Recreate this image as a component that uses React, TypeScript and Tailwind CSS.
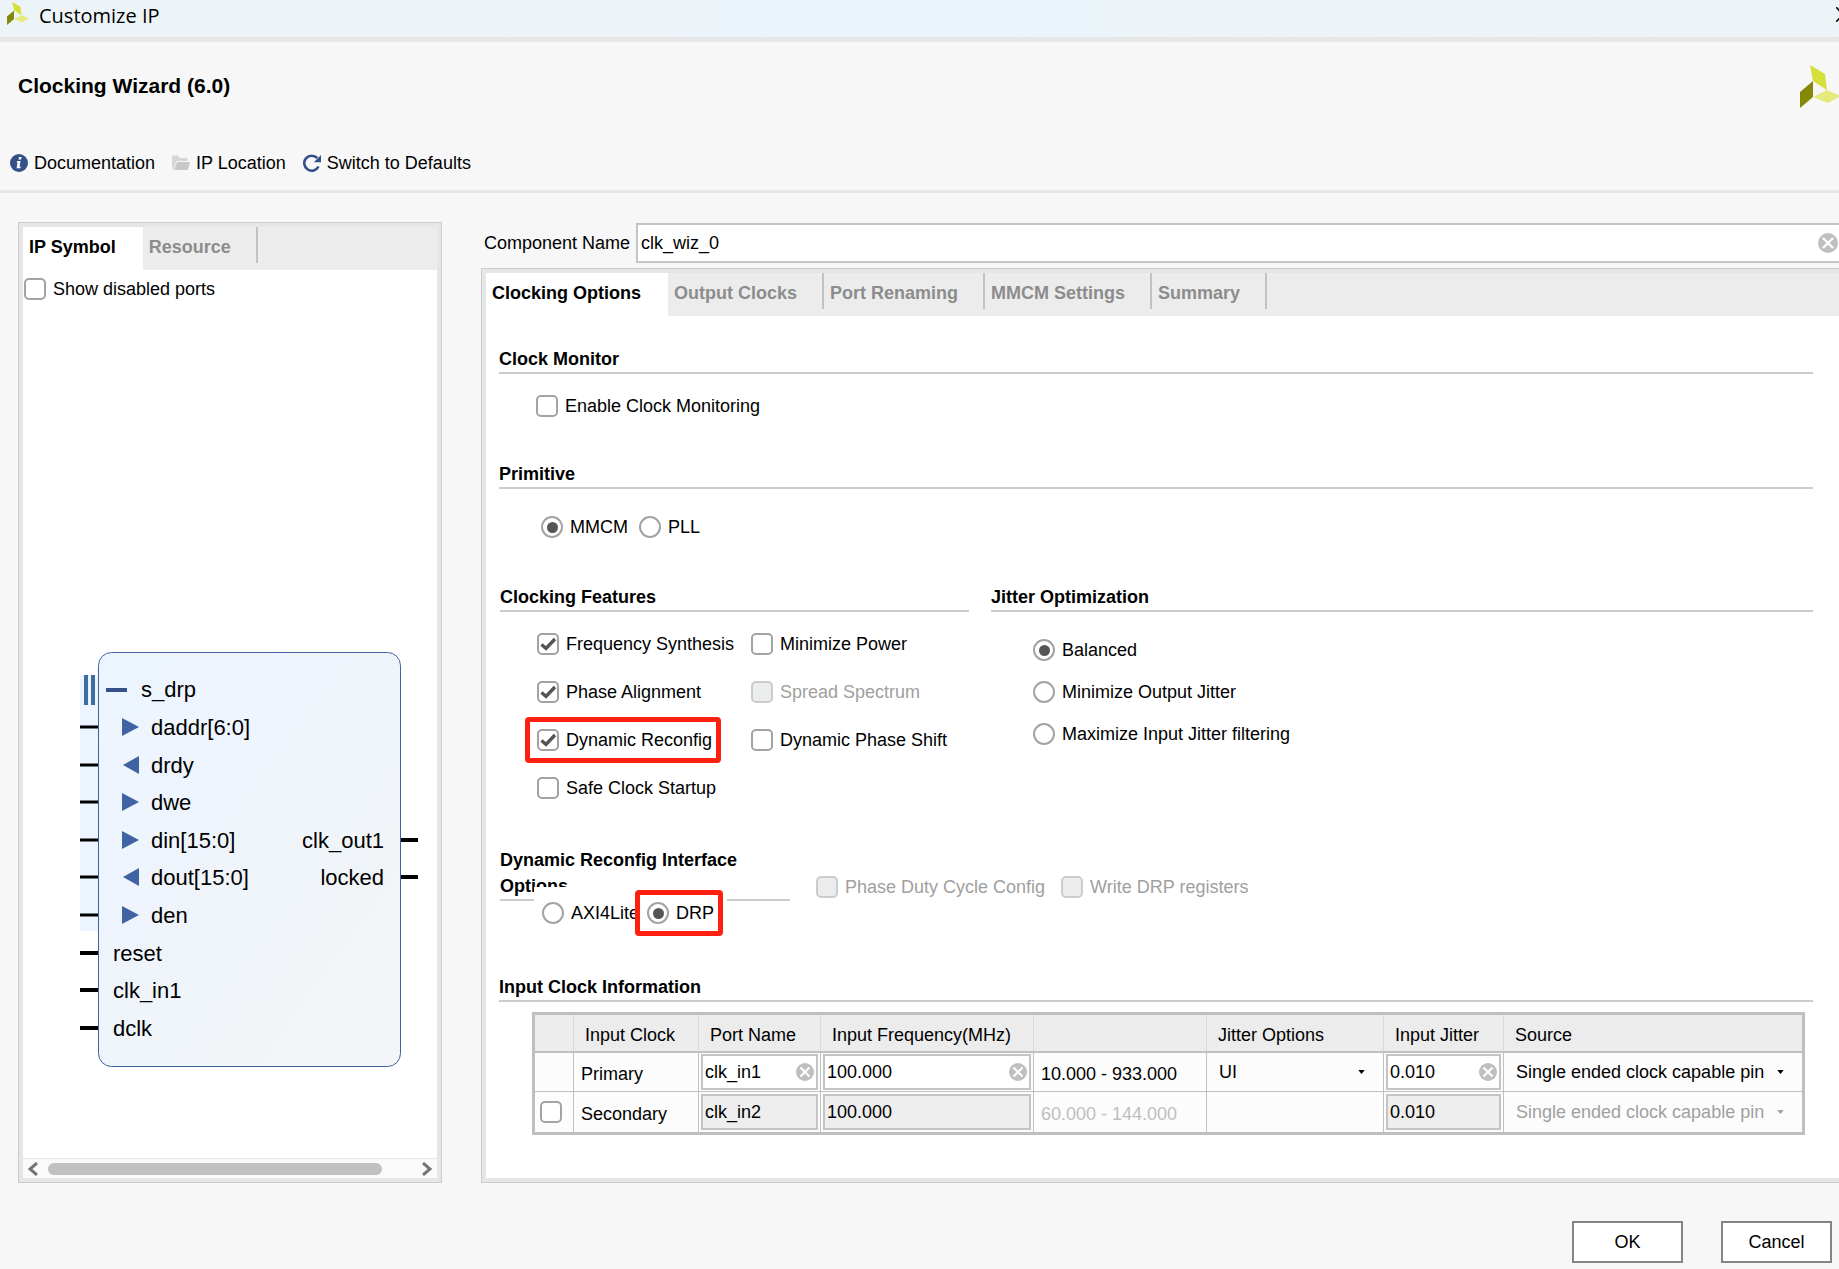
import React from 'react';
import clsx from 'clsx';

const LEFT_TABS = ['IP Symbol', 'Resource'];
const MAIN_TABS = ['Clocking Options', 'Output Clocks', 'Port Renaming', 'MMCM Settings', 'Summary'];

const DRP_PORTS = [
  { name: 'daddr[6:0]', dir: 'in', y: 75 },
  { name: 'drdy', dir: 'out', y: 113 },
  { name: 'dwe', dir: 'in', y: 150 },
  { name: 'din[15:0]', dir: 'in', y: 188 },
  { name: 'dout[15:0]', dir: 'out', y: 225 },
  { name: 'den', dir: 'in', y: 263 },
];

const INPUT_PORTS = [
  { name: 'reset', y: 301 },
  { name: 'clk_in1', y: 338 },
  { name: 'dclk', y: 376 },
];

const OUTPUT_PORTS = [
  { name: 'clk_out1', y: 188 },
  { name: 'locked', y: 225 },
];

const Logo: React.FC<{ className?: string }> = ({ className }) => (
  <svg viewBox="0 0 41 43" className={className} aria-hidden="true">
    <polygon points="10,0 25,9 27,25 13,16" fill="#d6e03a" />
    <polygon points="0,27 13,16 13,32 0,43" fill="#868609" />
    <polygon points="13,32 27,25 41,31 28,38" fill="#e4eb7c" />
  </svg>
);

const ClearIcon: React.FC<{ className?: string }> = ({ className }) => (
  <svg viewBox="0 0 20 20" className={className} aria-hidden="true">
    <circle cx="10" cy="10" r="10" fill="#bfbfbf" />
    <path d="M5 5l10 10M15 5L5 15" stroke="#fff" strokeWidth="2.4" />
  </svg>
);

type ToggleProps = {
  label: string;
  checked?: boolean;
  disabled?: boolean;
  name?: string;
  highlight?: boolean;
};

const Highlight = () => (
  <span className="pointer-events-none absolute -top-[12px] -right-[9px] -bottom-[12px] -left-[12px] rounded-[4px] border-[5px] border-[#ff2010]" />
);

const CheckBox: React.FC<ToggleProps> = ({ label, checked, disabled, highlight }) => (
  <label className={clsx('relative flex h-[22px] w-fit items-center gap-[7px] whitespace-nowrap', disabled && 'text-[#a0a0a0]')}>
    <span className="grid">
      <input
        type="checkbox"
        defaultChecked={checked}
        disabled={disabled}
        className="peer col-start-1 row-start-1 size-[22px] appearance-none rounded-[5px] border-2 border-[#a3a3a3] bg-white disabled:border-[#cccccc] disabled:bg-[#ebecee]"
      />
      <svg viewBox="0 0 22 22" className="pointer-events-none col-start-1 row-start-1 hidden size-[22px] peer-checked:block">
        <path d="M4.500 11.500l4.500 4L18 6" fill="none" stroke="#555" strokeWidth="3.400" />
      </svg>
    </span>
    {label}
    {highlight && <Highlight />}
  </label>
);

const Radio: React.FC<ToggleProps> = ({ label, checked, name, highlight }) => (
  <label className="relative flex h-[22px] w-fit items-center gap-[7px] whitespace-nowrap">
    <span className="grid">
      <input
        type="radio"
        name={name}
        defaultChecked={checked}
        className="peer col-start-1 row-start-1 size-[22px] appearance-none rounded-full border-2 border-[#a3a3a3] bg-white"
      />
      <span className="pointer-events-none col-start-1 row-start-1 hidden size-[11px] place-self-center rounded-full bg-[#555] peer-checked:block" />
    </span>
    {label}
    {highlight && <Highlight />}
  </label>
);

const Tabs: React.FC<{ items: string[] }> = ({ items }) => (
  <div role="tablist" className="flex h-[43px] bg-[#ececec] font-bold">
    {items.map((item, i) => (
      <button
        key={item}
        type="button"
        role="tab"
        aria-selected={i === 0}
        className={clsx('flex h-full items-start pl-[6px] whitespace-nowrap', i === 0 ? 'bg-white pr-[27px]' : 'text-[#8c8c8c]')}
      >
        <span className="leading-[40px]">{item}</span>
        {i > 0 && <span className="ml-[25px] h-[36px] w-[2px] bg-[#c2c2c2]" />}
      </button>
    ))}
  </div>
);

const Heading: React.FC<{ children: React.ReactNode }> = ({ children }) => (
  <h2 className="border-b-2 border-[#cccccc] leading-[26px] font-bold">{children}</h2>
);

type FieldProps = { label: string; value: string; disabled?: boolean };

const CellField: React.FC<FieldProps> = ({ label, value, disabled }) => (
  <div
    className={clsx(
      'mx-[2px] flex h-[36px] items-center border-2 border-[#c4c4c4] pr-[2px] pl-[2px]',
      disabled ? 'bg-[#eeeeee]' : 'bg-white'
    )}
  >
    <input aria-label={label} defaultValue={value} disabled={disabled} className="w-0 min-w-0 flex-1 bg-transparent leading-[22px] outline-none" />
    {!disabled && (
      <button type="button" aria-label={`Clear ${label}`}>
        <ClearIcon className="size-[18px]" />
      </button>
    )}
  </div>
);

const CellSelect: React.FC<FieldProps> = ({ label, value, disabled }) => (
  <div className={clsx('grid items-center', disabled && 'text-[#a0a0a0]')}>
    <select
      aria-label={label}
      disabled={disabled}
      className="col-start-1 row-start-1 w-full appearance-none bg-transparent pl-[12px] leading-[22px] opacity-100 outline-none"
    >
      <option>{value}</option>
    </select>
    <svg viewBox="0 0 8 5" className="pointer-events-none col-start-1 row-start-1 mr-[18px] h-[4px] w-[7px] justify-self-end" fill="currentColor">
      <path d="M0 0h8L4 5z" />
    </svg>
  </div>
);

const IpSymbol = () => (
  <svg viewBox="0 0 338 415" className="mt-auto mb-[91px] ml-[57px] h-[415px] w-[338px] shrink-0 text-[22px]">
    <defs>
      <linearGradient id="block" x1="0" y1="0" x2="1" y2="1">
        <stop offset="0" stopColor="#ecf5ff" />
        <stop offset="0.4" stopColor="#eff4fc" />
        <stop offset="0.6" stopColor="#f0f5f9" />
        <stop offset="1" stopColor="#f3f5f8" />
      </linearGradient>
    </defs>
    <rect x="0" y="23" width="18" height="256" fill="#ecf5ff" />
    <rect x="18.5" y="0.5" width="302" height="414" rx="13" fill="url(#block)" stroke="#4261a0" />
    <path d="M6 23v30M13 23v30" stroke="#3f6d9f" strokeWidth="4" />
    <path d="M26 38h21" stroke="#34518b" strokeWidth="4" />
    <text x="61" y="45">s_drp</text>
    {DRP_PORTS.map((port) => (
      <g key={port.name}>
        <path d={`M0 ${port.y}h18`} stroke="#000" strokeWidth="3" />
        <polygon
          points={port.dir === 'in' ? `42,${port.y - 9} 59,${port.y} 42,${port.y + 9}` : `59,${port.y - 9} 43,${port.y} 59,${port.y + 9}`}
          fill="#4063a4"
        />
        <text x="71" y={port.y + 8}>{port.name}</text>
      </g>
    ))}
    {INPUT_PORTS.map((port) => (
      <g key={port.name}>
        <path d={`M0 ${port.y}h18`} stroke="#000" strokeWidth="4" />
        <text x="33" y={port.y + 8}>{port.name}</text>
      </g>
    ))}
    {OUTPUT_PORTS.map((port) => (
      <g key={port.name}>
        <path d={`M321 ${port.y}h17`} stroke="#000" strokeWidth="4" />
        <text x="304" y={port.y + 8} textAnchor="end">{port.name}</text>
      </g>
    ))}
  </svg>
);

const SymbolPanel = () => (
  <section className="flex w-[424px] shrink-0 flex-col border border-[#cccccc] bg-[#e6e6e6] p-[4px]">
    <Tabs items={LEFT_TABS} />
    <div className="flex flex-1 flex-col bg-white">
      <div className="pt-[8px] pl-px">
        <CheckBox label="Show disabled ports" />
      </div>
      <IpSymbol />
      <div className="flex h-[20px] items-center justify-between border-t border-[#e6e6e6] bg-[#fafafa] px-[5px]">
        <button type="button" aria-label="Scroll left">
          <svg viewBox="0 0 10 14" className="h-[14px] w-[10px]" fill="none" stroke="#757575" strokeWidth="3">
            <path d="M9 1L2 7l7 6" />
          </svg>
        </button>
        <div className="mx-[10px] flex-1">
          <div className="h-[12px] w-11/12 rounded-full bg-[#c0c0c0]" />
        </div>
        <button type="button" aria-label="Scroll right">
          <svg viewBox="0 0 10 14" className="h-[14px] w-[10px]" fill="none" stroke="#757575" strokeWidth="3">
            <path d="M1 1l7 6-7 6" />
          </svg>
        </button>
      </div>
    </div>
  </section>
);

const ClockTable = () => (
  <table className="w-full table-fixed border-collapse border-[3px] border-[#bfbfbf] text-left">
    <colgroup>
      <col className="w-[40px]" />
      <col className="w-[125px]" />
      <col className="w-[122px]" />
      <col className="w-[213px]" />
      <col className="w-[173px]" />
      <col className="w-[177px]" />
      <col className="w-[120px]" />
      <col />
    </colgroup>
    <thead>
      <tr className="h-[38px] border-b-2 border-[#bfbfbf] bg-[#ececec]">
        {['', 'Input Clock', 'Port Name', 'Input Frequency(MHz)', '', 'Jitter Options', 'Input Jitter', 'Source'].map((title, i) => (
          <th key={i} className="border-x border-x-[#dadada] pt-[4px] pl-[11px] font-normal whitespace-nowrap">
            {title}
          </th>
        ))}
      </tr>
    </thead>
    <tbody className="bg-[#fcfcfc] [&_td]:border [&_td]:border-[#c0c0c0]">
      <tr className="h-[40px]">
        <td />
        <td className="pt-[4px] pl-[7px]">Primary</td>
        <td><CellField label="Primary port name" value="clk_in1" /></td>
        <td><CellField label="Primary frequency" value="100.000" /></td>
        <td className="pt-[4px] pl-[7px]">10.000 - 933.000</td>
        <td><CellSelect label="Primary jitter options" value="UI" /></td>
        <td><CellField label="Primary input jitter" value="0.010" /></td>
        <td><CellSelect label="Primary source" value="Single ended clock capable pin" /></td>
      </tr>
      <tr className="h-[42px]">
        <td className="pl-[5px]">
          <input type="checkbox" aria-label="Enable secondary clock" className="block size-[22px] appearance-none rounded-[5px] border-2 border-[#a3a3a3] bg-white" />
        </td>
        <td className="pt-[4px] pl-[7px]">Secondary</td>
        <td><CellField label="Secondary port name" value="clk_in2" disabled /></td>
        <td><CellField label="Secondary frequency" value="100.000" disabled /></td>
        <td className="pt-[4px] pl-[7px] text-[#bfbfbf]">60.000 - 144.000</td>
        <td />
        <td><CellField label="Secondary input jitter" value="0.010" disabled /></td>
        <td><CellSelect label="Secondary source" value="Single ended clock capable pin" disabled /></td>
      </tr>
    </tbody>
  </table>
);

const OptionsPanel = () => (
  <section className="flex-1 border-y border-l border-[#cccccc] bg-[#e6e6e6] py-[4px] pl-[4px]">
    <Tabs items={MAIN_TABS} />
    <div className="h-[calc(100%-43px)] bg-white pt-[30px] pr-[26px] pl-[13px]">
      <Heading>Clock Monitor</Heading>
      <div className="mt-[21px] pl-[37px]">
        <CheckBox label="Enable Clock Monitoring" />
      </div>

      <div className="mt-[44px]">
        <Heading>Primitive</Heading>
        <div className="mt-[27px] flex gap-[11px] pl-[42px]">
          <Radio name="primitive" label="MMCM" checked />
          <Radio name="primitive" label="PLL" />
        </div>
      </div>

      <div className="mt-[46px] flex gap-[22px] pl-px">
        <div className="w-[469px]">
          <Heading>Clocking Features</Heading>
          <div className="mt-[21px] grid grid-cols-[214px_1fr] gap-y-[26px] pl-[37px]">
            <CheckBox label="Frequency Synthesis" checked />
            <CheckBox label="Minimize Power" />
            <CheckBox label="Phase Alignment" checked />
            <CheckBox label="Spread Spectrum" disabled />
            <CheckBox label="Dynamic Reconfig" checked highlight />
            <CheckBox label="Dynamic Phase Shift" />
            <CheckBox label="Safe Clock Startup" />
          </div>
        </div>
        <div className="flex-1">
          <Heading>Jitter Optimization</Heading>
          <div className="mt-[27px] flex flex-col gap-[20px] pl-[42px]">
            <Radio name="jitter" label="Balanced" checked />
            <Radio name="jitter" label="Minimize Output Jitter" />
            <Radio name="jitter" label="Maximize Input Jitter filtering" />
          </div>
        </div>
      </div>

      <div className="mt-[48px] flex pl-px">
        <div className="w-[290px]">
          <Heading>Dynamic Reconfig Interface Options</Heading>
          {/* the radio row overlaps the wrapped heading */}
          <div className="relative -mt-[14px] ml-[34px] flex h-[52px] w-[193px] items-center gap-[8px] bg-white pl-[8px]">
            <Radio name="interface" label="AXI4Lite" />
            <Radio name="interface" label="DRP" checked highlight />
          </div>
        </div>
        <div className="mt-[29px] ml-[26px] flex gap-[16px]">
          <CheckBox label="Phase Duty Cycle Config" disabled />
          <CheckBox label="Write DRP registers" disabled />
        </div>
      </div>

      <div className="mt-[35px]">
        <Heading>Input Clock Information</Heading>
        <div className="mt-[10px] mr-[8px] mb-[42px] ml-[33px]">
          <ClockTable />
        </div>
      </div>
    </div>
  </section>
);

export default function App() {
  return (
    <div className="flex min-h-screen flex-col overflow-hidden bg-[#f7f7f7] font-['Liberation_Sans',Arial,sans-serif] text-[18px] leading-[22px] text-black">
      <header className="flex h-[42px] items-start border-b-[5px] border-[#e6e6e6] bg-linear-to-r from-[#edf4f7] via-[#ebf4fb] to-[#eef3f7] pl-[6px]">
        <Logo className="mt-[2px] h-[23px] w-[24px]" />
        <span className="ml-[9px] font-['Open_Sans','Noto_Sans',sans-serif] text-[20px] leading-[32px]">Customize IP</span>
        <button type="button" aria-label="Close" className="mt-[7px] -mr-[11px] ml-auto">
          <svg viewBox="0 0 14 15" className="h-[15px] w-[14px]" stroke="#111" strokeWidth="1.6">
            <path d="M0 0l14 15M14 0L0 15" />
          </svg>
        </button>
      </header>

      <div className="border-b-[3px] border-[#e6e6e6]">
        <div className="flex items-start justify-between pt-[23px] pl-[18px]">
          <h1 className="text-[21px] leading-[42px] font-bold">Clocking Wizard (6.0)</h1>
          <Logo className="-mr-[2px] h-[43px] w-[41px]" />
        </div>
        <nav className="mt-[44px] flex items-center gap-[17px] pb-[16px] pl-[10px]">
          <button type="button" className="flex items-center gap-[6px]">
            <svg viewBox="0 0 18 18" className="size-[18px]">
              <circle cx="9" cy="9" r="9" fill="#34508a" />
              <path d="M9 3h2.6l-.5 2.6H8.5zM7 7h3.6l-1.1 5.6h1.2l-.3 1.6H6.6l1-5.6H6.7z" fill="#fff" />
            </svg>
            Documentation
          </button>
          <button type="button" className="flex items-center gap-[6px]">
            <svg viewBox="0 0 18 16" className="h-[16px] w-[18px]">
              <path d="M0 1.500L1 .5h5l1.500 2.500H15.500V6H4.500L1.500 14H0z" fill="#d6d6d6" />
              <path d="M5 7h13l-2 8H2z" fill="#c8c8c8" />
            </svg>
            IP Location
          </button>
          <button type="button" className="flex items-center gap-[6px]">
            <svg viewBox="0 0 18 18" className="size-[18px]">
              <path d="M15.500 12.500A7.500 7.500 0 1 1 14.200 4" fill="none" stroke="#34508a" strokeWidth="2.600" />
              <path d="M18 1v7.200h-7.200z" fill="#34508a" />
            </svg>
            Switch to Defaults
          </button>
        </nav>
      </div>

      <main className="flex flex-1 gap-[39px] pt-[29px] pl-[18px]">
        <SymbolPanel />
        <div className="flex min-w-0 flex-1 flex-col">
          <div className="mt-px mb-[5px] flex items-center gap-[6px] pl-[3px]">
            <label htmlFor="component-name" className="whitespace-nowrap">Component Name</label>
            <div className="flex h-[40px] flex-1 items-center border-y-2 border-l-2 border-[#c4c4c4] bg-white pr-px pl-[3px]">
              <input id="component-name" defaultValue="clk_wiz_0" className="min-w-0 flex-1 outline-none" />
              <button type="button" aria-label="Clear component name">
                <ClearIcon className="size-[20px]" />
              </button>
            </div>
          </div>
          <OptionsPanel />
        </div>
      </main>

      <footer className="flex justify-end gap-[38px] pt-[38px] pr-[7px] pb-[6px]">
        <button type="button" className="h-[42px] w-[111px] border-2 border-[#858585] bg-white">OK</button>
        <button type="button" className="h-[42px] w-[111px] border-2 border-[#858585] bg-white">Cancel</button>
      </footer>
    </div>
  );
}
